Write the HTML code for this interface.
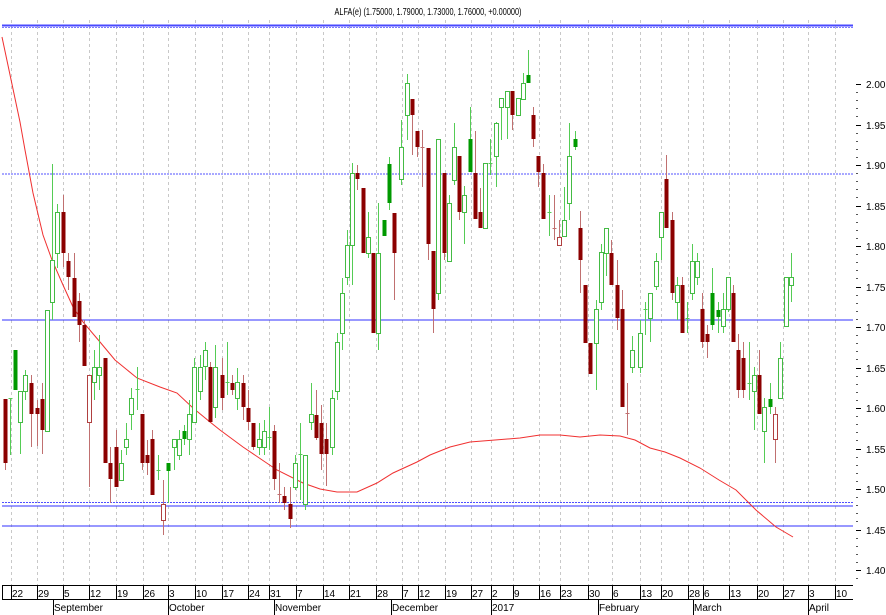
<!DOCTYPE html>
<html><head><meta charset="utf-8"><style>
html,body{margin:0;padding:0;background:#fff;}
svg{display:block;}
text{font-family:"Liberation Sans",sans-serif;fill:#000;}
</style></head><body>
<svg id="c" width="886" height="615" viewBox="0 0 886 615" xmlns="http://www.w3.org/2000/svg">
<rect width="886" height="615" fill="#fff"/>
<g id="grid" stroke="#c8c8c8" stroke-width="1" stroke-dasharray="3,3"></g>
<text x="428" y="15" font-size="10" text-anchor="middle" textLength="187" lengthAdjust="spacingAndGlyphs">ALFA(e) (1.75000, 1.79000, 1.73000, 1.76000, +0.00000)</text>
<g id="hl"></g>
<path id="ma" fill="none" stroke="#f03030" stroke-width="1" d=""/>
<g id="cd"></g>
<g id="ax" stroke="#000" stroke-width="1"></g>
<g font-size="10">
<text x="866" y="88">2.00</text><text x="866" y="129">1.95</text><text x="866" y="169">1.90</text><text x="866" y="210">1.85</text><text x="866" y="250">1.80</text><text x="866" y="291">1.75</text><text x="866" y="331">1.70</text><text x="866" y="372">1.65</text><text x="866" y="412">1.60</text><text x="866" y="453">1.55</text><text x="866" y="493">1.50</text><text x="866" y="534">1.45</text><text x="866" y="574">1.40</text>
</g>
<g font-size="10" id="days">
<text x="12" y="597">22</text><text x="38" y="597">29</text><text x="64" y="597">5</text><text x="90" y="597">12</text><text x="117" y="597">19</text><text x="144" y="597">26</text><text x="169" y="597">3</text><text x="196" y="597">10</text><text x="223" y="597">17</text><text x="249" y="597">24</text><text x="270" y="597">31</text><text x="297" y="597">7</text><text x="324" y="597">14</text><text x="350" y="597">21</text><text x="377" y="597">28</text><text x="403" y="597">7</text><text x="419" y="597">12</text><text x="446" y="597">19</text><text x="472" y="597">27</text><text x="492" y="597">2</text><text x="514" y="597">9</text><text x="540" y="597">16</text><text x="561" y="597">23</text><text x="589" y="597">30</text><text x="613" y="597">6</text><text x="641" y="597">13</text><text x="662" y="597">20</text><text x="689" y="597">28</text><text x="704" y="597">6</text><text x="730" y="597">13</text><text x="758" y="597">20</text><text x="784" y="597">27</text><text x="809" y="597">3</text><text x="836" y="597">10</text>
</g>
<g font-size="10">
<text x="54" y="611">September</text><text x="169" y="611">October</text><text x="275" y="611">November</text><text x="392" y="611">December</text><text x="492" y="611">2017</text><text x="599" y="611">February</text><text x="694" y="611">March</text><text x="809" y="611">April</text>
</g>
</svg>
<script>
var NS="http://www.w3.org/2000/svg";
function el(p,t,a){var e=document.createElementNS(NS,t);for(var k in a)e.setAttribute(k,a[k]);p.appendChild(e);return e;}
var grid=document.getElementById('grid');
var gx=[11,37,63,89,116,143,168,195,222,248,269,296,323,349,376,402,418,445,471,491,513,539,560,588,612,640,661,688,703,729,757,783,808,835];
gx.forEach(function(x){el(grid,'line',{x1:x+.5,y1:20,x2:x+.5,y2:585});});
var hl=document.getElementById('hl');
el(hl,'line',{x1:2,y1:25.5,x2:853,y2:25.5,stroke:'#4a4aff','stroke-width':2});
el(hl,'line',{x1:2,y1:27.5,x2:853,y2:27.5,stroke:'#7a7aff','stroke-width':1,'stroke-dasharray':'2,1'});
el(hl,'line',{x1:2,y1:174,x2:853,y2:174,stroke:'#5050ff','stroke-width':1,'stroke-dasharray':'2,1'});
el(hl,'line',{x1:2,y1:320,x2:853,y2:320,stroke:'#3030ff','stroke-width':1});
el(hl,'line',{x1:2,y1:502.5,x2:853,y2:502.5,stroke:'#5050ff','stroke-width':1,'stroke-dasharray':'2,1'});
el(hl,'line',{x1:2,y1:506,x2:853,y2:506,stroke:'#3030ff','stroke-width':1});
el(hl,'line',{x1:2,y1:526,x2:853,y2:526,stroke:'#3030ff','stroke-width':1});
document.getElementById('ma').setAttribute('d','M2,37 L20,122 L25,150 L33,193 L43,235 L52,260 L63,285 L73,307 L83,322 L100,342 L115,360 L137,378 L160,387 L177,393 L193,408 L210,422 L220,430 L243,447 L277,470 L303,483 L320,489 L337,492 L357,492 L377,483 L393,473 L417,462 L430,455 L450,447 L470,442 L495,440 L520,438 L540,435 L560,435 L580,437 L600,435 L620,436 L635,440 L650,448 L665,452 L680,458 L700,468 L719,480 L736,490 L756,510 L776,527 L793,537');
var C=[[5,'R',399,463,399,470],[10,'d',398,398,398,455],[15,'G',350,390,350,390],[20,'g',391,422,391,454],[25,'g',375,391,370,400],[31,'R',383,414,375,447],[37,'R',408,414,400,446],[42,'R',399,430,383,454],[47,'g',310,431,310,431],[52,'g',260,302,164,320],[57,'g',212,253,204,268],[63,'R',212,253,195,267],[68,'R',261,277,253,290],[74,'R',278,317,253,317],[79,'R',301,325,293,342],[84,'R',325,366,320,366],[89,'r',375,422,375,487],[94,'g',367,382,350,400],[99,'g',367,375,335,390],[105,'R',358,463,358,463],[110,'R',463,479,447,503],[116,'R',447,487,430,487],[121,'g',463,480,450,480],[126,'g',439,447,423,455],[131,'g',398,414,388,430],[137,'d',389,389,367,410],[142,'R',414,463,414,470],[147,'R',455,463,440,475],[152,'R',439,495,430,495],[158,'d',470,470,455,480],[163,'r',504,520,480,535],[168,'G',463,471,463,503],[174,'g',439,447,439,470],[179,'g',439,455,430,460],[184,'G',431,439,425,445],[189,'g',414,439,400,455],[194,'g',367,422,358,422],[200,'g',367,391,355,400],[205,'g',350,366,342,380],[210,'R',367,422,362,422],[215,'g',367,407,345,418],[222,'R',375,398,358,410],[227,'d',382,382,342,395],[232,'R',383,390,375,395],[237,'g',382,398,368,410],[243,'R',383,407,375,420],[248,'R',408,422,390,430],[253,'R',423,447,423,450],[259,'g',439,447,423,455],[264,'g',431,447,420,455],[269,'d',437,437,407,450],[274,'R',431,479,425,490],[279,'D',494,494,463,503],[284,'R',496,503,487,510],[290,'R',504,519,487,528],[295,'g',463,487,455,490],[300,'d',454,454,423,500],[305,'g',455,504,455,510],[311,'g',414,422,383,430],[316,'R',415,438,390,440],[321,'R',423,454,405,470],[326,'R',439,454,423,486],[332,'g',398,447,390,455],[337,'g',342,391,333,400],[342,'g',293,333,278,350],[347,'g',245,277,230,285],[352,'g',173,245,163,285],[357,'R',173,179,165,190],[363,'R',188,253,188,253],[368,'g',237,253,212,258],[373,'R',253,333,253,333],[378,'g',253,333,203,350],[384,'G',220,236,220,236],[389,'G',164,203,157,210],[394,'R',213,253,213,300],[401,'g',147,179,120,185],[407,'g',83,115,74,140],[412,'R',99,115,99,155],[417,'R',131,147,131,157],[422,'D',147,147,130,187],[428,'R',148,244,148,260],[433,'R',251,309,251,333],[438,'g',139,293,139,300],[444,'R',173,253,173,260],[449,'g',203,261,195,261],[454,'g',147,180,123,185],[459,'R',156,212,156,220],[464,'g',195,212,186,244],[470,'G',139,172,107,172],[475,'R',173,219,131,219],[480,'R',212,228,188,228],[485,'g',163,228,163,228],[490,'d',163,163,139,175],[496,'g',123,156,122,187],[501,'g',98,107,98,140],[507,'g',91,107,91,139],[512,'R',91,115,91,130],[518,'g',98,115,98,115],[523,'g',83,99,73,99],[528,'G',75,83,50,83],[533,'R',115,139,107,147],[538,'R',156,172,156,187],[543,'R',173,219,164,219],[549,'d',212,212,195,236],[554,'D',228,228,195,240],[559,'r',237,245,220,245],[564,'g',220,236,187,236],[569,'g',156,203,123,220],[575,'G',139,147,131,150],[580,'R',228,260,211,293],[585,'R',285,343,285,343],[590,'R',343,374,343,374],[596,'g',309,343,300,390],[601,'g',252,302,244,310],[606,'g',228,253,228,276],[611,'R',253,285,240,285],[617,'R',285,318,260,330],[622,'R',309,407,290,407],[627,'D',413,413,383,435],[632,'g',350,367,336,373],[640,'g',333,367,320,373],[645,'d',309,309,302,335],[650,'g',293,318,293,342],[656,'g',261,286,253,290],[661,'g',212,237,212,260],[666,'R',179,228,155,228],[672,'R',220,293,212,300],[677,'g',285,302,277,320],[682,'R',285,333,277,333],[687,'d',318,318,302,333],[692,'g',261,293,244,300],[697,'g',261,277,253,285],[702,'R',309,342,293,348],[707,'R',334,342,325,358],[712,'G',293,325,268,330],[718,'G',310,317,302,333],[723,'g',309,326,293,333],[728,'g',277,309,277,312],[733,'R',293,342,285,342],[738,'R',350,390,334,398],[743,'R',358,390,342,398],[749,'d',383,383,342,400],[754,'g',375,391,367,430],[759,'R',375,414,350,414],[764,'g',407,431,398,463],[770,'G',399,407,383,414],[775,'r',414,439,407,463],[780,'g',358,398,342,398],[786,'g',277,326,277,326],[791,'g',277,285,253,302]];
var cd=document.getElementById('cd');
C.forEach(function(c){var x=c[0],t=c[1],o=c[2],b=c[3],h=c[4],l=c[5];
 var red=(t=='R'||t=='r'||t=='D');
 var wc=red?'#c07070':'#55cc55';
 el(cd,'line',{x1:x+.5,y1:h,x2:x+.5,y2:l,stroke:wc,'stroke-width':1});
 if(t=='d'||t=='D'){el(cd,'line',{x1:x-1.5,y1:o+.5,x2:x+2.5,y2:o+.5,stroke:wc,'stroke-width':1});return;}
 var hgt=Math.max(b-o,2);
 if(t=='R')el(cd,'rect',{x:x-1.5,y:o,width:4,height:hgt,fill:'#8b0000'});
 else if(t=='G')el(cd,'rect',{x:x-1.5,y:o,width:4,height:hgt,fill:'#009900'});
 else if(t=='r')el(cd,'rect',{x:x-1.5,y:o+.5,width:4,height:hgt,fill:'#fff',stroke:'#b04040','stroke-width':1});
 else el(cd,'rect',{x:x-1.5,y:o+.5,width:4,height:hgt,fill:'#fff',stroke:'#44bb44','stroke-width':1});
});
var ax=document.getElementById('ax');
el(ax,'line',{x1:2,y1:585.5,x2:853,y2:585.5});
el(ax,'line',{x1:2,y1:599.5,x2:853,y2:599.5});
el(ax,'line',{x1:2.5,y1:585,x2:2.5,y2:600});
gx.forEach(function(x){el(ax,'line',{x1:x+.5,y1:586,x2:x+.5,y2:599});});
[53,168,274,391,491,598,693,808].forEach(function(x){el(ax,'line',{x1:x+.5,y1:599,x2:x+.5,y2:615});});
for(var i=0;i<=65;i++){var y=Math.round(84+i*8.1)+.5;var maj=(i%5==0);
 if(y<22||y>583)continue;
 el(ax,'line',{x1:856,y1:y,x2:maj?861:858,y2:y,stroke:maj?'#000':'#555'});}
</script>
</body></html>
